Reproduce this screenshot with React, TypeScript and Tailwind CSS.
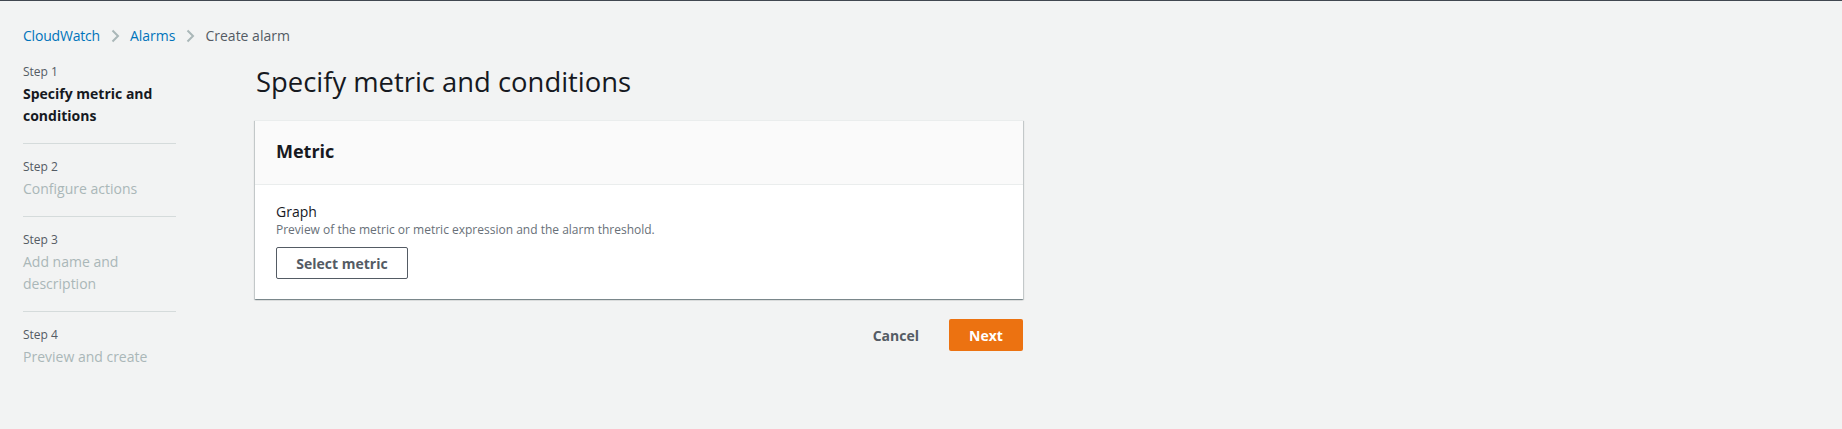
import React from "react";

const font = { fontFamily: '"Open Sans", "Noto Sans", Arial, sans-serif' };

function Chevron() {
  return (
    <svg width="16" height="16" viewBox="0 0 16 16" className="mx-[7px]" fill="none">
      <path d="M5.5 2.5 L11 8 L5.5 13.5" stroke="#aab7b8" strokeWidth="2" />
    </svg>
  );
}

const steps = [
  { label: "Step 1", name: ["Specify metric and", "conditions"], active: true },
  { label: "Step 2", name: ["Configure actions"], active: false },
  { label: "Step 3", name: ["Add name and", "description"], active: false },
  { label: "Step 4", name: ["Preview and create"], active: false },
];

export default function App() {
  return (
    <div className="min-h-[429px] w-full bg-[#f2f3f3] border-t border-[#414750]" style={font}>
      <div className="pl-[23px] pt-[25px]">
        <nav className="flex items-center h-[20px] text-[14px] leading-[20px]">
          <span className="text-[#0073bb] tracking-[-0.2px]">CloudWatch</span>
          <Chevron />
          <span className="text-[#0073bb]">Alarms</span>
          <Chevron />
          <span className="text-[#545b64]">Create alarm</span>
        </nav>
        <div className="flex mt-[18px]">
          <ul className="w-[153px] shrink-0">
            {steps.map((s, i) => (
              <li
                key={i}
                className={
                  (i > 0 ? "pt-[15px] " : "") +
                  (i < steps.length - 1 ? "pb-[16px] border-b border-[#d5dbdb]" : "")
                }
              >
                <div className="text-[12px] leading-[16px] text-[#545b64]">{s.label}</div>
                <div
                  className={
                    "mt-[3px] text-[14px] leading-[22px] " +
                    (s.active ? "font-bold text-[#16191f]" : "text-[#aab7b8]")
                  }
                >
                  {s.name.map((n, j) => (
                    <div key={j}>{n}</div>
                  ))}
                </div>
              </li>
            ))}
          </ul>
          <main className="ml-[79px] w-[768px]">
            <h1 className="pl-[1px] text-[27.4px] leading-[36px] text-[#16191f] font-normal">
              Specify metric and conditions
            </h1>
            <div className="mt-[20px] bg-white border-t border-[#eaeded] shadow-[0_1px_1px_0_rgba(0,28,36,0.3),1px_1px_1px_0_rgba(0,28,36,0.15),-1px_1px_1px_0_rgba(0,28,36,0.15)]">
              <div className="bg-[#fafafa] border-b border-[#eaeded] px-5 pt-[18px] pb-[20px]">
                <h2 className="pl-[1px] text-[18px] leading-[25px] font-bold text-[#16191f]">Metric</h2>
              </div>
              <div className="px-5 pt-[17px] pb-[20px]">
                <div className="pl-[1px] text-[14px] leading-[20px] text-[#16191f]">Graph</div>
                <div className="pl-[1px] text-[12px] leading-[16px] text-[#687078]">
                  Preview of the metric or metric expression and the alarm threshold.
                </div>
                <button className="ml-[1px] mt-[9px] h-[32px] w-[132px] border border-[#545b64] rounded-[2px] bg-white text-[14px] font-bold text-[#545b64]">
                  Select metric
                </button>
              </div>
            </div>
            <div className="mt-[20px] flex justify-end gap-[10px]">
              <button className="h-[32px] px-5 text-[14px] font-bold text-[#545b64]">Cancel</button>
              <button className="h-[32px] w-[74px] rounded-[2px] bg-[#ec7211] text-[14px] font-bold text-white">
                Next
              </button>
            </div>
          </main>
        </div>
      </div>
    </div>
  );
}
